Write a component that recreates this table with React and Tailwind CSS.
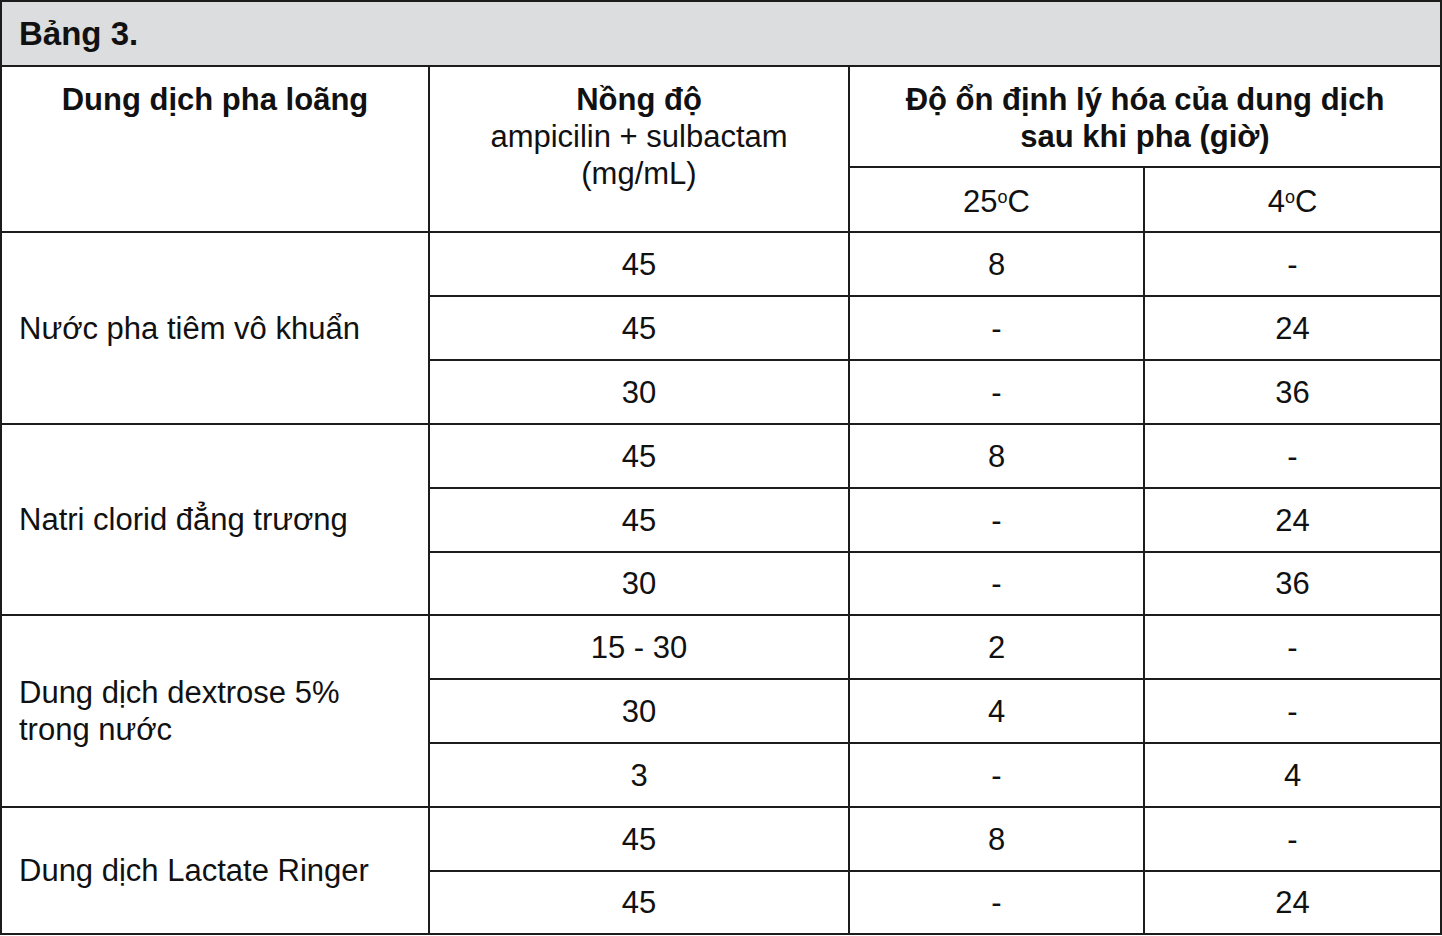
import React from "react";

const rows = [
  { group: "Nước pha tiêm vô khuẩn", span: 3, conc: "45", t25: "8", t4: "-" },
  { conc: "45", t25: "-", t4: "24" },
  { conc: "30", t25: "-", t4: "36" },
  { group: "Natri clorid đẳng trương", span: 3, conc: "45", t25: "8", t4: "-" },
  { conc: "45", t25: "-", t4: "24" },
  { conc: "30", t25: "-", t4: "36", short: true },
  { group: "Dung dịch dextrose 5%\ntrong nước", span: 3, conc: "15 - 30", t25: "2", t4: "-" },
  { conc: "30", t25: "4", t4: "-" },
  { conc: "3", t25: "-", t4: "4" },
  { group: "Dung dịch Lactate Ringer", span: 2, conc: "45", t25: "8", t4: "-" },
  { conc: "45", t25: "-", t4: "24", short: true },
];

const cell = "border-2 border-[#1c1c1c]";

const Deg = () => (
  <span className="relative -top-[9px] text-[18px] leading-none">o</span>
);

export default function App() {
  return (
    <div
      className="w-[1442px] h-[936px] bg-white text-[#111] text-[31px] leading-[37px]"
      style={{ fontFamily: '"Liberation Sans", Arial, sans-serif' }}
    >
      <table className="w-[1440px] table-fixed border-collapse">
        <colgroup>
          <col className="w-[428px]" />
          <col className="w-[420px]" />
          <col className="w-[295px]" />
          <col className="w-[297px]" />
        </colgroup>
        <tbody>
          <tr className="h-[65px]">
            <td colSpan={4} className={`${cell} bg-[#dcdddf] px-[17px] text-[33px] font-bold`}>
              Bảng 3.
            </td>
          </tr>

          {/* header */}
          <tr className="h-[101px]">
            <td rowSpan={2} className={`${cell} align-top pt-[14px] text-center font-bold`}>
              Dung dịch pha loãng
            </td>
            <td rowSpan={2} className={`${cell} align-top pt-[14px] text-center`}>
              <div className="font-bold">Nồng độ</div>
              <div>ampicilin + sulbactam</div>
              <div>(mg/mL)</div>
            </td>
            <td colSpan={2} className={`${cell} align-top pt-[14px] text-center font-bold`}>
              Độ ổn định lý hóa của dung dịch
              <br />
              sau khi pha (giờ)
            </td>
          </tr>
          <tr className="h-[65px]">
            <td className={`${cell} text-center pt-[4px]`}>
              25<Deg />C
            </td>
            <td className={`${cell} text-center pt-[4px]`}>
              4<Deg />C
            </td>
          </tr>

          {rows.map((r, i) => (
            <tr key={i} className={r.short ? "h-[63px]" : "h-[64px]"}>
              {r.group && (
                <td rowSpan={r.span} className={`${cell} px-[17px] whitespace-pre-line`}>
                  {r.group}
                </td>
              )}
              <td className={`${cell} text-center`}>{r.conc}</td>
              <td className={`${cell} text-center`}>{r.t25}</td>
              <td className={`${cell} text-center`}>{r.t4}</td>
            </tr>
          ))}
        </tbody>
      </table>
    </div>
  );
}
